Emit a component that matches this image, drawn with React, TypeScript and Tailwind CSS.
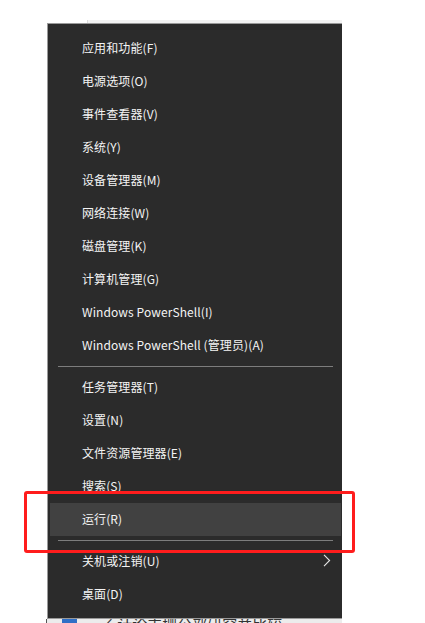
import { Fragment } from "react";

type Item = { label: string; active?: boolean; submenu?: boolean } | "sep";

const items: Item[] = [
  { label: "应用和功能(F)" },
  { label: "电源选项(O)" },
  { label: "事件查看器(V)" },
  { label: "系统(Y)" },
  { label: "设备管理器(M)" },
  { label: "网络连接(W)" },
  { label: "磁盘管理(K)" },
  { label: "计算机管理(G)" },
  { label: "Windows PowerShell(I)" },
  { label: "Windows PowerShell (管理员)(A)" },
  "sep",
  { label: "任务管理器(T)" },
  { label: "设置(N)" },
  { label: "文件资源管理器(E)" },
  { label: "搜索(S)" },
  { label: "运行(R)", active: true },
  "sep",
  { label: "关机或注销(U)", submenu: true },
  { label: "桌面(D)" },
];

function Chevron() {
  return (
    <svg width="8" height="13" viewBox="0 0 8 13" className="text-[#e6e6e6]">
      <path d="M1 0.8 L6.6 6.5 L1 12.2" fill="none" stroke="currentColor" strokeWidth="1.1" />
    </svg>
  );
}

export default function App() {
  return (
    <div
      className="relative h-[623px] w-[425px] overflow-hidden bg-white"
      style={{ fontFamily: '"Noto Sans CJK SC", "Microsoft YaHei", sans-serif' }}
    >
      {/* window edge peeking behind the menu */}
      <div className="ml-[87px] mt-[20px] h-[3px] w-[255px] border-l border-[#dcdcdc] bg-[#f3f3f3]" />

      <div className="ml-[47px] w-[295px] border-y border-l border-[#9a9a9a] bg-[#2b2b2b] pb-[7px] pt-[8px]">
        {items.map((item, i) =>
          item === "sep" ? (
            <div key={i} className="flex h-[9px] items-center pl-[10px] pr-[9px]">
              <div className="h-px w-full bg-[#7d7d7d]" />
            </div>
          ) : (
            <Fragment key={i}>
              <div
                className={
                  item.active
                    ? "ml-[2px] mr-px flex h-[33px] items-center justify-between bg-[#414141] pb-[2px] pl-[32px] pr-[10px] text-[12px] text-[#f4f4f4]"
                    : "ml-[2px] mr-px flex h-[33px] items-center justify-between pb-[2px] pl-[32px] pr-[10px] text-[12px] text-[#f4f4f4]"
                }
              >
                <span className="whitespace-pre tracking-[0.1px]">{item.label}</span>
                {item.submenu && <Chevron />}
              </div>
            </Fragment>
          )
        )}
      </div>

      {/* taskbar strip under the menu */}
      <div className="flex h-[4px] w-[296px] ml-[46px] items-start overflow-hidden border-l border-[#555] bg-[#ececec]">
        <div className="ml-[15px] h-[6px] w-[15px] bg-[#2f6fc6]" />
        <span className="ml-[22px] -mt-[5px] whitespace-nowrap text-[15px] leading-[20px] text-[#333]">↙ 计论丰栅公部研究并比较</span>
      </div>

      {/* red highlight around 运行 */}
      <div className="absolute left-[24px] top-[491px] h-[62px] w-[331px] rounded-[3px] border-[3px] border-[#ff1d1d]" />
    </div>
  );
}
